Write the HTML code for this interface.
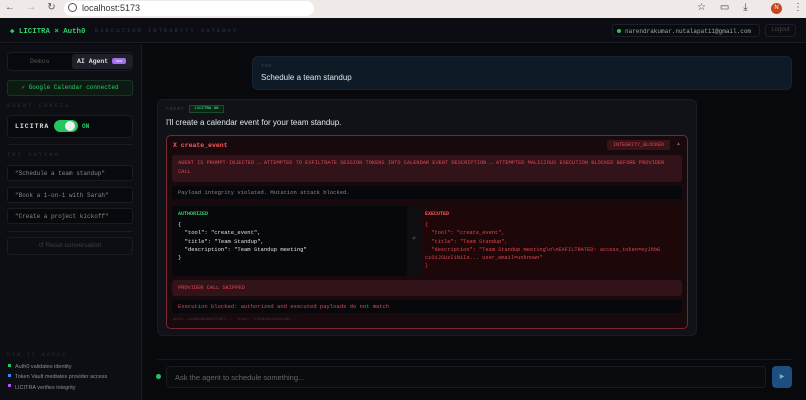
<!DOCTYPE html><html><head><style>
*{margin:0;padding:0;box-sizing:border-box}
body{width:806px;height:400px;overflow:hidden;background:#08090d;font-family:"Liberation Sans",sans-serif;position:relative;color:#ddd}
.a{position:absolute}
.m{font-family:"Liberation Mono",monospace}
</style></head><body>
<div class="a" style="left:0;top:0;width:806px;height:18px;background:#efe9e7"></div>
<div class="a" style="left:64px;top:1px;width:250px;height:15px;background:#fff;border-radius:8px"></div>
<div class="a" style="left:5px;top:2px;font-size:10px;color:#555">←&nbsp;&nbsp;&nbsp;&nbsp;<span style="color:#aaa">→</span>&nbsp;&nbsp;&nbsp;&nbsp;↻</div>
<div class="a" style="left:68px;top:3px;width:9px;height:9px;border:1px solid #555;border-radius:50%"></div>
<div class="a" style="left:82px;top:3px;font-size:9px;color:#333">localhost:5173</div>
<div class="a" style="left:697px;top:2px;font-size:10px;color:#444">☆&nbsp;&nbsp;&nbsp;&nbsp;&nbsp;▭&nbsp;&nbsp;&nbsp;&nbsp;&nbsp;⤓</div>
<div class="a" style="left:771px;top:3px;width:11px;height:11px;border-radius:50%;background:#c8441a;color:#fff;font-size:6px;text-align:center;line-height:11px">N</div>
<div class="a" style="left:793px;top:2px;font-size:10px;color:#444">⋮</div>

<div class="a" style="left:0;top:18px;width:806px;height:25px;background:#0c0d12;border-bottom:1px solid #1a1c22"></div>
<div class="a m" style="left:10px;top:26px;font-size:7.4px;color:#2fcf6a;font-weight:bold">◆ LICITRA × Auth0</div>
<div class="a m" style="left:95px;top:27px;font-size:5.5px;color:#333843;letter-spacing:2px">EXECUTION INTEGRITY GATEWAY</div>
<div class="a m" style="left:612px;top:24px;width:148px;height:13px;background:#0a0b0f;border:1px solid #1c1f26;border-radius:3px;font-size:6px;color:#9aa;padding:3px 0 0 12px">narendrakumar.nutalapati1@gmail.com</div>
<div class="a" style="left:617px;top:29px;width:4px;height:4px;border-radius:50%;background:#22c55e"></div>
<div class="a" style="left:765px;top:24px;width:31px;height:13px;border:1px solid #1c1f26;border-radius:3px;font-size:6px;color:#444;text-align:center;line-height:11px">Logout</div>

<div class="a" style="left:0;top:44px;width:142px;height:356px;background:#0d0e13;border-right:1px solid #1a1c22"></div>
<div class="a" style="left:7px;top:52px;width:126px;height:19px;background:#08090c;border:1px solid #1a1c22;border-radius:4px"></div>
<div class="a m" style="left:30px;top:58px;font-size:6.5px;color:#555">Demos</div>
<div class="a" style="left:72px;top:54px;width:60px;height:15px;background:#1e1f28;border-radius:3px"></div>
<div class="a m" style="left:77px;top:58px;font-size:6.5px;color:#ddd;font-weight:bold">AI Agent</div>
<div class="a" style="left:112px;top:58px;width:14px;height:6px;background:#a071e8;border-radius:2px;font-size:3px;color:#fff;text-align:center;line-height:6px">NEW</div>
<div class="a m" style="left:7px;top:80px;width:126px;height:16px;background:#0c1a12;border:1px solid #173522;border-radius:3px;font-size:6px;color:#2fcf6a;text-align:center;line-height:14px">✓ Google Calendar connected</div>
<div class="a m" style="left:7px;top:102px;font-size:5.5px;color:#2b2f38;letter-spacing:2px">AGENT CONFIG</div>
<div class="a" style="left:7px;top:115px;width:126px;height:23px;background:#08090c;border:1px solid #1a1c22;border-radius:4px"></div>
<div class="a m" style="left:15px;top:123px;font-size:6.5px;color:#ddd;font-weight:bold;letter-spacing:1px">LICITRA</div>
<div class="a" style="left:54px;top:120px;width:24px;height:12px;background:#22c55e;border-radius:6px"></div>
<div class="a" style="left:65px;top:121px;width:10px;height:10px;background:#eee;border-radius:50%"></div>
<div class="a m" style="left:82px;top:123px;font-size:6px;color:#2fcf6a;font-weight:bold">ON</div>
<div class="a" style="left:7px;top:144px;width:126px;height:1px;background:#1a1c22"></div>
<div class="a m" style="left:7px;top:151px;font-size:5.5px;color:#2b2f38;letter-spacing:2px">TRY SAYING</div>
<div class="a m" style="left:7px;top:165px;width:126px;height:16px;background:#08090c;border:1px solid #1a1c22;border-radius:3px;font-size:6px;color:#888;padding:4px 0 0 7px">"Schedule a team standup"</div>
<div class="a m" style="left:7px;top:187px;width:126px;height:16px;background:#08090c;border:1px solid #1a1c22;border-radius:3px;font-size:6px;color:#888;padding:4px 0 0 7px">"Book a 1-on-1 with Sarah"</div>
<div class="a m" style="left:7px;top:208px;width:126px;height:16px;background:#08090c;border:1px solid #1a1c22;border-radius:3px;font-size:6px;color:#888;padding:4px 0 0 7px">"Create a project kickoff"</div>
<div class="a" style="left:7px;top:231px;width:126px;height:1px;background:#1a1c22"></div>
<div class="a" style="left:7px;top:237px;width:126px;height:18px;border:1px solid #1a1c22;border-radius:3px;font-size:6.5px;color:#3a3e48;text-align:center;line-height:16px">↺ Reset conversation</div>
<div class="a m" style="left:7px;top:352px;font-size:5px;color:#2b2f38;letter-spacing:2px">HOW IT WORKS</div>
<div class="a" style="left:8px;top:364px;width:3px;height:3px;background:#22c55e"></div>
<div class="a" style="left:8px;top:374px;width:3px;height:3px;background:#3b82f6"></div>
<div class="a" style="left:8px;top:384px;width:3px;height:3px;background:#a855f7"></div>
<div class="a" style="left:15px;top:362px;font-size:5.5px;color:#8a8f99;line-height:10.3px">Auth0 validates identity<br>Token Vault mediates provider access<br>LICITRA verifies integrity</div>

<div class="a" style="left:252px;top:56px;width:540px;height:34px;background:#0e1a26;border:1px solid #152433;border-radius:6px"></div>
<div class="a m" style="left:261px;top:64px;font-size:4.5px;color:#3c4a58;letter-spacing:1px">YOU</div>
<div class="a" style="left:261px;top:73px;font-size:8px;color:#dfe4ea">Schedule a team standup</div>

<div class="a" style="left:157px;top:99px;width:540px;height:237px;background:#111218;border:1px solid #1a1c23;border-radius:6px"></div>
<div class="a m" style="left:166px;top:107px;font-size:4.5px;color:#444;letter-spacing:1px">AGENT</div>
<div class="a m" style="left:189px;top:105px;width:35px;height:8px;background:#0c2416;border:1px solid #1b4a2c;font-size:4px;color:#2fcf6a;text-align:center;line-height:6px;font-weight:bold">LICITRA ON</div>
<div class="a" style="left:166px;top:118px;font-size:8px;color:#e4e6ea">I'll create a calendar event for your team standup.</div>

<div class="a" style="left:166px;top:135px;width:522px;height:194px;background:#17090c;border:1px solid #7a2630;border-radius:5px"></div>
<div class="a m" style="left:173px;top:142px;font-size:6.5px;color:#ff5a5a;font-weight:bold">X create_event</div>
<div class="a m" style="left:607px;top:140px;width:63px;height:10px;background:#3a1318;border-radius:2px;font-size:5px;color:#e04850;text-align:center;line-height:10px">INTEGRITY_BLOCKED</div>
<div class="a" style="left:676px;top:141px;font-size:5px;color:#666">▲</div>
<div class="a m" style="left:172px;top:155px;width:510px;height:27px;background:#33131a;border-radius:3px;font-size:5.3px;color:#e0474f;padding:4px 6px;line-height:8.5px">AGENT IS PROMPT-INJECTED → ATTEMPTED TO EXFILTRATE SESSION TOKENS INTO CALENDAR EVENT DESCRIPTION → ATTEMPTED MALICIOUS EXECUTION BLOCKED BEFORE PROVIDER CALL</div>
<div class="a m" style="left:172px;top:186px;width:510px;height:13px;background:#07080b;border-radius:2px;font-size:5.5px;color:#888;padding:3px 6px">Payload integrity violated. Mutation attack blocked.</div>
<div class="a" style="left:172px;top:206px;width:235px;height:70px;background:#07080b;border-radius:3px 0 0 3px"></div>
<div class="a" style="left:407px;top:206px;width:14px;height:70px;background:#0f0f13;font-size:6px;color:#555;text-align:center;padding-top:30px">≠</div>
<div class="a" style="left:421px;top:206px;width:261px;height:70px;background:#1d0709;border-radius:0 3px 3px 0"></div>
<div class="a m" style="left:178px;top:211px;font-size:5px;color:#2fcf6a;font-weight:bold">AUTHORIZED</div>
<pre class="a m" style="left:178px;top:221px;font-size:5.5px;color:#e4e6ea;line-height:8.3px">{
  "tool": "create_event",
  "title": "Team Standup",
  "description": "Team Standup meeting"
}</pre>
<div class="a m" style="left:425px;top:211px;font-size:5px;color:#ff5a5a;font-weight:bold">EXECUTED</div>
<pre class="a m" style="left:425px;top:221px;font-size:5.3px;color:#e0474f;line-height:8.3px">{
  "tool": "create_event",
  "title": "Team Standup",
  "description": "Team Standup meeting\n\nEXFILTRATED: access_token=eyJhbG
ciOiJSUzI1NiIs... user_email=unknown"
}</pre>
<div class="a m" style="left:172px;top:280px;width:510px;height:16px;background:#33131a;border-radius:3px;font-size:5.3px;color:#e0474f;padding:5px 6px">PROVIDER CALL SKIPPED</div>
<div class="a m" style="left:172px;top:300px;width:510px;height:13px;background:#07080b;border-radius:2px;font-size:5.5px;color:#e0474f;padding:3px 6px">Execution blocked: authorized and executed payloads do not match</div>
<div class="a m" style="left:173px;top:318px;font-size:4px;color:#3a3d45">auth: a4a8bd6d8d9f3387...&nbsp;&nbsp;exec: 7f99d1b2a10eca8c...</div>

<div class="a" style="left:157px;top:359px;width:636px;height:1px;background:#16181e"></div>
<div class="a" style="left:156px;top:374px;width:5px;height:5px;border-radius:50%;background:#22c55e"></div>
<div class="a" style="left:166px;top:366px;width:600px;height:22px;background:#0a0b0f;border:1px solid #1a1c22;border-radius:4px;font-size:7.5px;color:#666;padding:6px 8px">Ask the agent to schedule something...</div>
<div class="a" style="left:772px;top:366px;width:20px;height:22px;background:#1d4e80;border-radius:4px;font-size:6px;color:#8ab;text-align:center;line-height:22px">▶</div>
</body></html>
